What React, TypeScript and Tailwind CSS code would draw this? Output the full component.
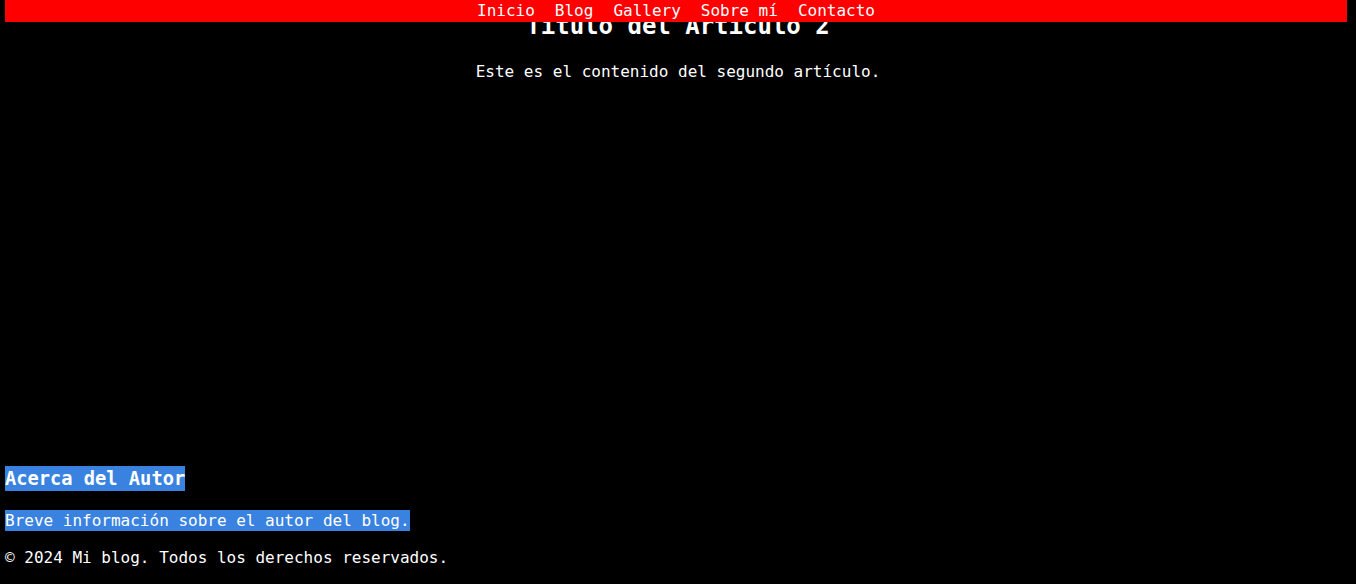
export default function App() {
  const links = ["Inicio", "Blog", "Gallery", "Sobre mí", "Contacto"]

  return (
    <div className="min-h-[584px] bg-black text-white font-['DejaVu_Sans_Mono',monospace] text-base">
      {/* fixed nav bar lying over the title */}
      <nav className="fixed top-0 left-[5px] w-[1342px] h-[22px] bg-[#ff0000] flex justify-center gap-5 leading-[22px] z-10">
        {links.map((l) => (
          <a key={l} href="#" className="text-white">
            {l}
          </a>
        ))}
      </nav>

      <main className="pt-2 text-center">
        <h2 className="text-2xl leading-9 font-bold">Título del Artículo 2</h2>
        <p className="mt-4 leading-6">Este es el contenido del segundo artículo.</p>
      </main>

      <aside className="mt-[382px] pl-[5px]">
        <h3 className="text-[18.72px] leading-[25px] font-bold">
          <span className="inline-block h-[25px] leading-[25px] bg-[#3a82e0]">Acerca del Autor</span>
        </h3>
        <p className="mt-[19px] leading-[21px]">
          <span className="inline-block h-[21px] leading-[21px] bg-[#3a82e0]">
            Breve información sobre el autor del blog.
          </span>
        </p>
      </aside>

      <footer className="mt-[15px] pl-[5px] leading-6">
        <p>© 2024 Mi blog. Todos los derechos reservados.</p>
      </footer>
    </div>
  )
}
